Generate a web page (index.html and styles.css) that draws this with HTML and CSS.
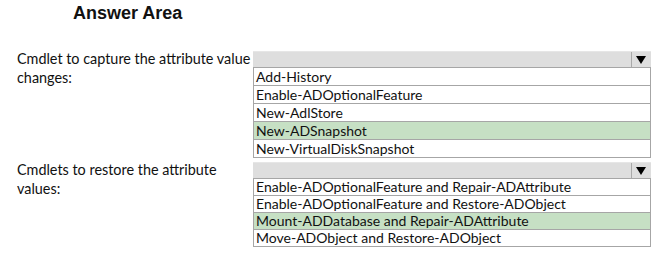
FILE: index.html
```html
<!DOCTYPE html>
<html lang="en">
<head>
<meta charset="utf-8">
<title>Answer Area</title>
<link rel="stylesheet" href="styles.css">
</head>
<body>
<main class="page">
  <h1 class="title">Answer Area</h1>

  <section class="question q-capture">
    <p class="label">Cmdlet to capture the attribute value<br>changes:</p>
    <div class="dropdown">
      <div class="dd-head">
        <span class="dd-value"></span>
        <span class="dd-arrow"><svg width="10" height="8" viewBox="0 0 10 8"><polygon points="0,0 10,0 5,8" fill="#000"/></svg></span>
      </div>
      <ul class="dd-list">
        <li>Add-History</li>
        <li>Enable-ADOptionalFeature</li>
        <li>New-AdlStore</li>
        <li class="selected">New-ADSnapshot</li>
        <li>New-VirtualDiskSnapshot</li>
      </ul>
    </div>
  </section>

  <section class="question q-restore">
    <p class="label">Cmdlets to restore the attribute<br>values:</p>
    <div class="dropdown">
      <div class="dd-head">
        <span class="dd-value"></span>
        <span class="dd-arrow"><svg width="10" height="8" viewBox="0 0 10 8"><polygon points="0,0 10,0 5,8" fill="#000"/></svg></span>
      </div>
      <ul class="dd-list compact">
        <li>Enable-ADOptionalFeature and Repair-ADAttribute</li>
        <li>Enable-ADOptionalFeature and Restore-ADObject</li>
        <li class="selected">Mount-ADDatabase and Repair-ADAttribute</li>
        <li>Move-ADObject and Restore-ADObject</li>
      </ul>
    </div>
  </section>
</main>
</body>
</html>
```

FILE: styles.css
```css
* { box-sizing: border-box; }

html, body {
  margin: 0;
  padding: 0;
  background: #ffffff;
}

body {
  font-family: Lato, "Open Sans", sans-serif;
  color: #111111;
  font-size: 14px;
}

.page {
  width: 662px;
  height: 262px;
  overflow: hidden;
}

.title {
  margin: 0;
  padding: 3px 0 0 73px;
  font-family: "Liberation Sans", Arial, sans-serif;
  font-weight: bold;
  font-size: 18px;
  line-height: 21px;
  color: #111;
}

.question {
  display: grid;
  grid-template-columns: 236px 398px;
  padding-left: 17px;
  align-items: start;
}

.q-capture { margin-top: 27px; }
.q-restore { margin-top: 4px; }

.label {
  margin: -2px 0 0 0;
  font-size: 14.4px;
  line-height: 19px;
  color: #111111;
  white-space: nowrap;
}

.dropdown {
  display: flex;
  flex-direction: column;
}

.dd-head {
  display: flex;
  height: 16px;
  background: #dedede;
  border-top: 1px solid #e6e6e6;
}

.dd-value { flex: 1; }

.dd-arrow {
  width: 20px;
  border-left: 1px solid #a9a9a9;
  display: flex;
  align-items: center;
  justify-content: center;
  padding-right: 1px;
}

.dd-arrow svg { display: block; }

.dd-list {
  list-style: none;
  margin: 0;
  padding: 0;
  border-left: 1px solid #a6a6a6;
  border-right: 1px solid #a6a6a6;
  border-bottom: 1px solid #a6a6a6;
}

.dd-list li {
  height: 18px;
  line-height: 17px;
  border-top: 1px solid #a6a6a6;
  padding-left: 2px;
  font-size: 14px;
  white-space: nowrap;
}

.dd-list.compact li {
  height: 17px;
  line-height: 16px;
}

.dd-list li.selected {
  background: #c6e0c4;
}
```
